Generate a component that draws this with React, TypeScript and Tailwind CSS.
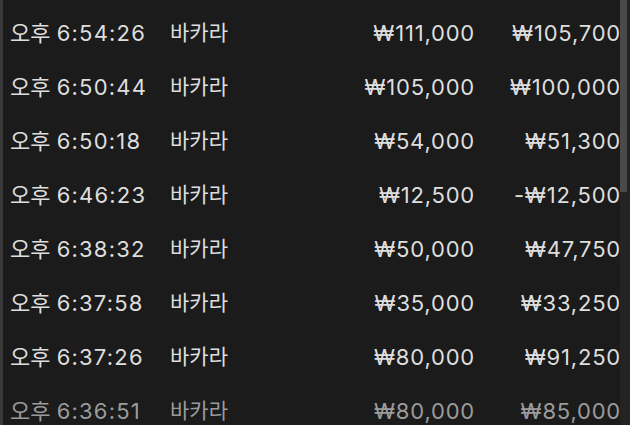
const rows = [
  { time: "6:54:26", bet: "₩111,000", win: "₩105,700" },
  { time: "6:50:44", bet: "₩105,000", win: "₩100,000" },
  { time: "6:50:18", bet: "₩54,000", win: "₩51,300" },
  { time: "6:46:23", bet: "₩12,500", win: "-₩12,500" },
  { time: "6:38:32", bet: "₩50,000", win: "₩47,750" },
  { time: "6:37:58", bet: "₩35,000", win: "₩33,250" },
  { time: "6:37:26", bet: "₩80,000", win: "₩91,250" },
  { time: "6:36:51", bet: "₩80,000", win: "₩85,000", dim: true },
];

export default function App() {
  return (
    <div
      className="w-[630px] h-[425px] overflow-hidden flex bg-[#1b1b1b]"
      style={{ fontFamily: 'Inter, "Noto Sans CJK KR", sans-serif' }}
    >
      <div className="w-[3px] bg-[#3a3a3a]" />
      <div className="flex-1 pt-[6px]">
        {rows.map((r) => (
          <div
            key={r.time}
            className={`h-[54px] flex items-center text-[22px] ${r.dim ? "text-[#9b9b9b]" : "text-[#dedede]"}`}
          >
            <span className="w-[167px] pl-[7px] whitespace-nowrap">
              오후 <span className="tracking-[1.2px]">{r.time}</span>
            </span>
            <span className="w-[150px] whitespace-nowrap text-[21px]">바카라</span>
            <span className="w-[155px] text-right whitespace-nowrap tracking-[0.8px]">{r.bet}</span>
            <span className="flex-1 text-right whitespace-nowrap tracking-[0.8px] mr-[-1px]">{r.win}</span>
          </div>
        ))}
      </div>
      <div className="w-[10px] flex flex-col bg-[#232323]">
        <div className="h-[192px] w-[7px] bg-[#4a4a4a]" />
      </div>
    </div>
  );
}
